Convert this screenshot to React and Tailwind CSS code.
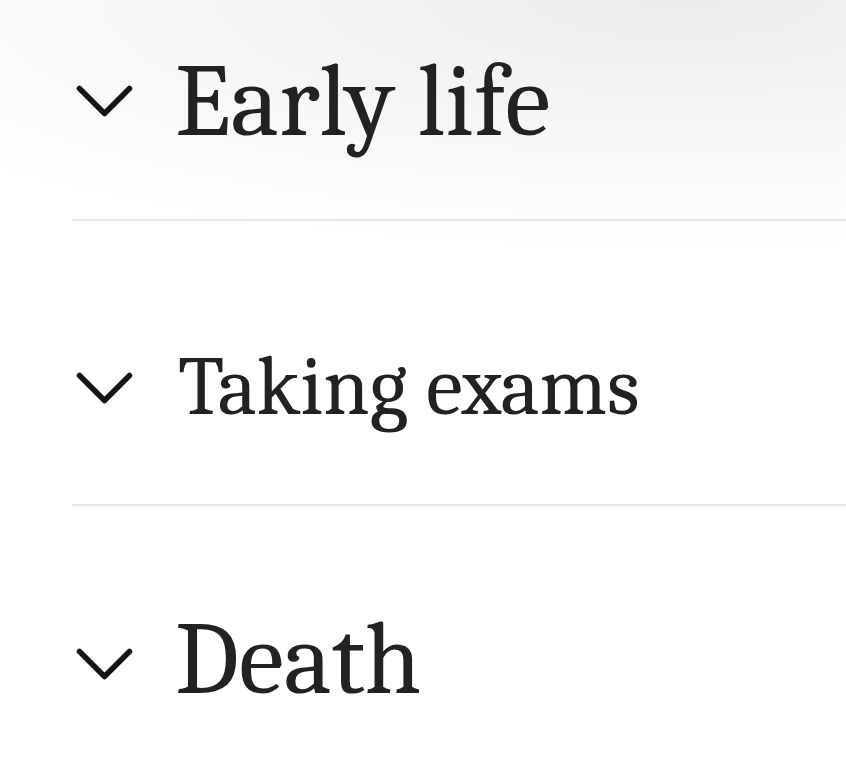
import React from 'react';

const Chevron = ({ className = '' }) => (
    <svg viewBox="0 0 57 33" className={`w-[57px] h-[33px] shrink-0 ${className}`} fill="none">
        <polyline
            points="3.5,3.5 28.5,28.5 53.5,3.5"
            stroke="#141414"
            strokeWidth="5.5"
            strokeLinecap="round"
            strokeLinejoin="round"
        />
    </svg>
);

const sections = [
    { title: 'Early life', row: 'h-[219px] pt-[50px]', text: 'text-[103px] ml-[42px]', chev: '' },
    { title: 'Taking exams', row: 'h-[283px] pt-[125px]', text: 'text-[83px] ml-[45px] text-[#1a1a1a]', chev: 'mt-[2px]' },
    { title: 'Death', row: 'h-[273px] pt-[103px]', text: 'text-[102px] ml-[42px]', chev: 'mt-[8px]' },
];

export default function App() {
    return (
        <div className="w-[846px] h-[780px] overflow-hidden bg-white font-serif">
            <div className="bg-[radial-gradient(ellipse_110%_32%_at_80%_0%,#ececec_0%,#f6f6f6_50%,#ffffff_100%)]">
                {sections.map((s, i) => (
                    <div key={s.title}>
                        <div className={`flex items-start pl-[76px] ${s.row}`}>
                            <div className="flex items-center">
                                <Chevron className={s.chev} />
                                <span className={`leading-none text-[#222222] whitespace-nowrap ${s.text}`}>
                                    {s.title}
                                </span>
                            </div>
                        </div>
                        {i < sections.length - 1 && <div className="ml-[72px] h-[2px] bg-[#e6e6e9]" />}
                    </div>
                ))}
            </div>
        </div>
    );
}
